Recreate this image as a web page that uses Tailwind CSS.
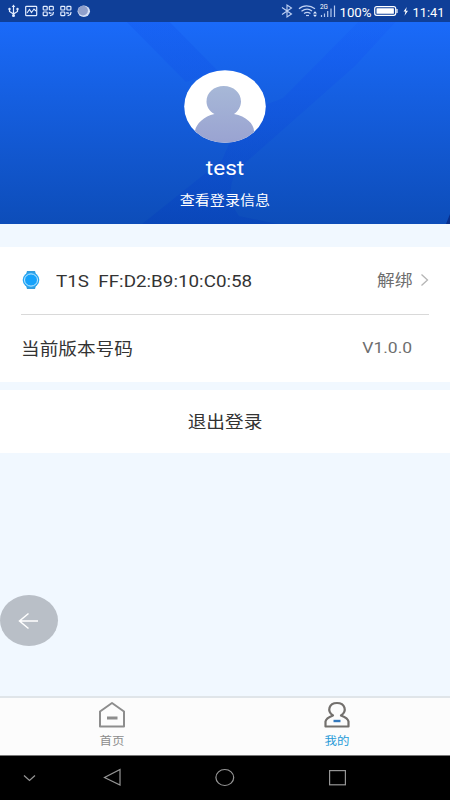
<!DOCTYPE html>
<html lang="zh-CN">
<head>
<meta charset="utf-8">
<title>我的</title>
<script src="https://cdn.jsdelivr.net/npm/@tailwindcss/browser@4"></script>
</head>
<body class="w-[450px] h-[800px] overflow-hidden bg-[#f1f8ff] font-[Roboto,'Noto_Sans_CJK_SC',sans-serif]">
<div class="flex h-[800px] flex-col">
  <header class="relative h-[224px] shrink-0 overflow-hidden bg-linear-to-b from-[#1a6af9] from-10% to-[#0d4db9] text-white">
    <svg class="absolute inset-0" width="450" height="224" viewBox="0 0 450 224">
      <defs>
        <linearGradient id="ray" x1="0" y1="0" x2="0" y2="1"><stop offset="0" stop-color="#1459f0" stop-opacity=".6"/><stop offset="1" stop-color="#0f50e6" stop-opacity=".5"/></linearGradient>
        <linearGradient id="arm" x1="0" y1="0" x2="0" y2="1"><stop offset="0" stop-color="#1459f8" stop-opacity=".1"/><stop offset=".25" stop-color="#1459f0" stop-opacity=".6"/><stop offset="1" stop-color="#0640ba" stop-opacity=".65"/></linearGradient>
      </defs>
      <path d="M105 0L186 82L218 71L148 0Z" fill="url(#ray)" opacity=".6"/>
      <path d="M380 0L283 98L265 105L229 144L222 160L142 224H278L239 216C230 204 227 185 238 169L252 157L355 66L416 0Z" fill="url(#arm)" opacity=".7"/>
      <path d="M450 214L446 224H450Z" fill="#082f8c"/>
    </svg>
    <div class="relative flex h-[22px] items-center bg-[#0f3f98]">
      <svg width="450" height="22" viewBox="0 0 450 22" fill="none" stroke="#e3edff" stroke-width="1.2">
        <path d="M13.500 6V16M9.500 8.500V11.500L13.500 14L17.500 11.500V9"/><path d="M11.700 7L13.500 4.500L15.300 7Z" fill="#e3edff" stroke="none"/><circle cx="9.500" cy="9" r="1.200" fill="#e3edff" stroke="none"/><circle cx="17.500" cy="9" r="1.200" fill="#e3edff" stroke="none"/><circle cx="13.500" cy="15.600" r="1.500" fill="#e3edff" stroke="none"/>
        <rect x="25.700" y="6.300" width="11" height="9.400" rx=".8"/><path d="M27 13L29.500 9.500L31.500 12.500L34 9L36 11" stroke-width="1.100"/>
        <g id="apps"><rect x="43.200" y="6.300" width="4" height="3.700" rx=".8"/><rect x="49.300" y="6.300" width="4" height="3.700" rx=".8"/><rect x="43.200" y="12" width="4" height="3.700" rx=".8"/><path d="M49.300 12V13.200H51.500M53.500 12L52.800 14.500L50 15.700"/></g>
        <use href="#apps" x="17.600"/>
        <ellipse cx="83.800" cy="11.200" rx="6.200" ry="5.700" fill="#d5dff5" stroke="none"/><circle cx="83" cy="10.600" r="4.900" fill="#8f9fcb" stroke="none"/>
        <path d="M282 7.500L291.500 14L287 17V5L291.500 8L282 14.500" stroke="#bfd1f4" stroke-width="1.100"/>
        <g stroke="#bfd1f4" stroke-width="1.200"><path d="M299 8.800C303 5 310 5 315 8.800M301.500 11.300C305 8.500 309 8.500 312 11M304 13.500C306 12 308.500 12 310.500 13.500"/><path d="M306 15.500H309" /></g>
        <path d="M313 13.500L315 11.300L317 13.500ZM313 14.800H317L315 17Z" fill="#e3edff" stroke="none"/>
        <g stroke="#b4c8ef" stroke-width="1.200"><path d="M321.500 15V17M324.500 13.500V17M327.700 11V17M331 8.500V17M334.500 5.500V17"/></g>
        <rect x="374.700" y="6.700" width="21" height="8.600" rx="2" stroke="#fff"/><rect x="376.500" y="8.200" width="17.400" height="5.600" rx=".5" fill="#fff" stroke="none"/><path d="M397 9V13" stroke="#fff"/>
        <path d="M406.800 7L403.500 11.600H405.500L404.500 15.700L408 10.700H405.900Z" fill="#fff" stroke="none"/>
        <g fill="#fff" stroke="none" font-family="Roboto, sans-serif">
          <text x="320" y="9" font-size="6.500" textLength="8" lengthAdjust="spacingAndGlyphs">2G</text>
          <text x="339.500" y="17" font-size="12.500" textLength="32" lengthAdjust="spacingAndGlyphs">100%</text>
          <text x="412.500" y="17" font-size="12.500" textLength="32" lengthAdjust="spacingAndGlyphs">11:41</text>
        </g>
      </svg>
    </div>
    <div class="relative flex flex-col items-center pt-[48px]">
      <svg width="82" height="73" viewBox="0 0 82 73">
        <defs><clipPath id="disc"><ellipse cx="41" cy="36.500" rx="40.800" ry="36.300"/></clipPath><linearGradient id="person" x1="0" y1="0" x2="0" y2="1"><stop stop-color="#a7b8d7"/><stop offset="1" stop-color="#99a2d1"/></linearGradient></defs>
        <ellipse cx="41" cy="36.500" rx="40.800" ry="36.300" fill="#fff"/>
        <path clip-path="url(#disc)" d="M30.500 44C25.500 41.500 22.500 36.500 22.500 31.500C22.500 22.500 30 16 39.700 16C49.500 16 57 22.500 57 31.500C57 36.500 54 41.500 50 44C62 46 70 54 70 61V75H11V61C12 54 20 46 30.500 44Z" fill="url(#person)"/>
      </svg>
      <div class="mt-[12px] h-[26px] scale-x-[1.13] text-[20px] leading-[26px]">test</div>
      <div class="mt-[10px] h-[20px] scale-x-[1.13] text-[13.300px] leading-[20px]">查看登录信息</div>
    </div>
  </header>
  <main class="flex flex-1 flex-col">
    <section class="mt-[23px] h-[135px] bg-white">
      <div class="flex h-[67px] items-center pl-[22px] pr-[20px]">
        <svg class="-mt-[2px]" width="18" height="20" viewBox="0 0 18 20"><path d="M5 1H13L14 4.500H4ZM4 15.500H14L13 19H5Z" fill="#339ddd"/><ellipse cx="9" cy="10" rx="8.300" ry="7.700" fill="#26a5f2"/><ellipse cx="9" cy="10" rx="6.500" ry="6.100" fill="#16a2fb" stroke="#d5f0ff" stroke-width=".9"/></svg>
        <div class="ml-[16px] origin-left scale-x-[1.14] whitespace-pre pt-[3px] text-[16.500px] text-[#333]">T1S  FF:D2:B9:10:C0:58</div>
        <div class="ml-auto origin-right scale-x-[1.13] text-[15.700px] text-[#6e6e6e]">解绑</div>
        <svg class="-mt-[2px] ml-[8px]" width="10" height="14" viewBox="0 0 10 14" fill="none" stroke="#b5b5b5" stroke-width="1.300"><path d="M1.500 1.500L7.500 7L1.500 12.500"/></svg>
      </div>
      <div class="mx-[21px] h-px bg-[#d9d9d9]"></div>
      <div class="flex h-[67px] items-center justify-between pl-[21px] pr-[38px]">
        <div class="origin-left scale-x-[1.13] pt-[4px] text-[16.500px] text-[#333]">当前版本号码</div>
        <div class="origin-right scale-x-[1.13] pt-px text-[15.500px] text-[#6e6e6e]">V1.0.0</div>
      </div>
    </section>
    <section class="mt-[8px] flex h-[63px] items-center justify-center bg-white">
      <div class="scale-x-[1.13] pt-[4px] text-[16.500px] text-[#333]">退出登录</div>
    </section>
    <button class="mt-[142px] flex h-[51px] w-[58px] items-center justify-center rounded-[50%] bg-[#b9bfc7]">
      <svg width="22" height="18" viewBox="0 0 22 18" fill="none" stroke="#fff" stroke-width="1.500"><path d="M20 9H1.500M10.500 1.500L1.500 9L10.500 16.500"/></svg>
    </button>
  </main>
  <nav class="grid h-[60px] shrink-0 grid-cols-2 border-t-2 border-[#e0e5e9] bg-[#fcfcfc]">
    <div class="flex flex-col items-center pt-[3px] pr-[2px]">
      <svg width="28" height="28" viewBox="0 0 28 28" fill="none" stroke="#8d8d8d" stroke-width="2"><path d="M2 10.500L14 2L26 10.500V25.500H2Z" stroke-linejoin="round"/><path d="M9 17H19.500" stroke-width="3"/></svg>
      <div class="mt-[4px] scale-x-[1.13] text-[11px] leading-[17px] text-[#8c8c8c]">首页</div>
    </div>
    <div class="flex flex-col items-center pt-[3px] pr-[2px]">
      <svg width="26" height="28" viewBox="0 0 26 28" fill="none" stroke="#73706d" stroke-width="2.200"><path d="M9 14.500C2.500 10 5 2 13 2S23.500 10 17 14.500C21 16 24 17.500 24.500 20.500V25.500H1.500V20.500C2 17.500 5 16 9 14.500Z" stroke-linejoin="round"/><path d="M9.500 20H16.500" stroke="#3479bd" stroke-width="2.400"/></svg>
      <div class="mt-[4px] scale-x-[1.13] text-[11px] leading-[17px] text-[#289bd8]">我的</div>
    </div>
  </nav>
  <footer class="-mt-px h-[45px] shrink-0 border-t border-[#777] bg-black">
    <svg width="450" height="44" viewBox="0 0 450 44" fill="none" stroke="#969696" stroke-width="1.200"><path d="M24 19.500L29.500 24.500L35 19.500"/><path d="M120 13.500V29L104.500 21.500Z"/><ellipse cx="224.800" cy="21.500" rx="8.900" ry="8"/><rect x="329.600" y="14.600" width="15.800" height="14.200"/></svg>
  </footer>
</div>
</body>
</html>
